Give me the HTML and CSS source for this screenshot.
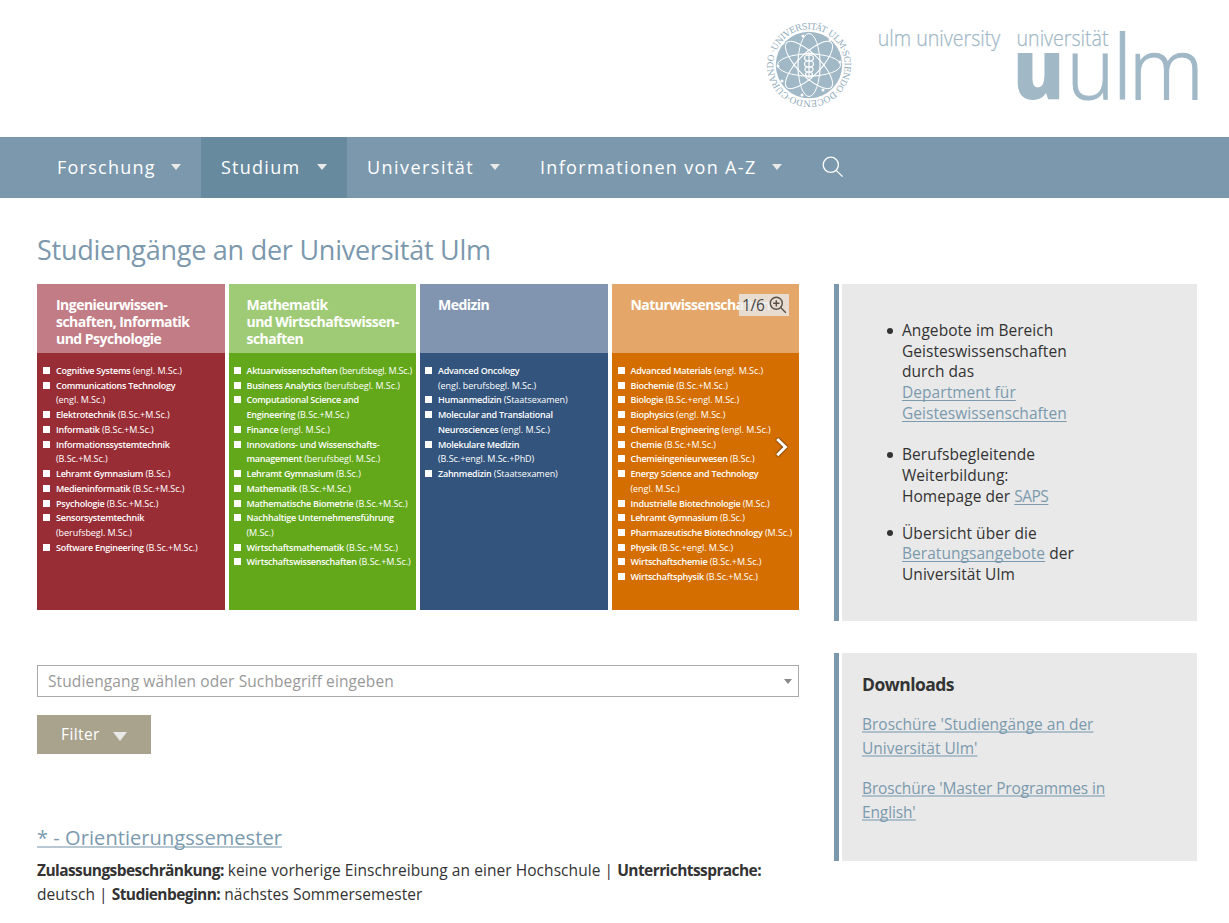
FILE: index.html
```
<!DOCTYPE html>
<html lang="de">
<head>
<meta charset="utf-8">
<title>Studiengänge an der Universität Ulm</title>
<link rel="stylesheet" href="styles.css">
</head>
<body>
<header class="header">
  <svg class="seal" viewBox="0 0 90 90" width="90" height="90" role="img" aria-label="Siegel der Universität Ulm">
    <defs><path id="ring" d="M11.3 33.2A35.7 35.7 0 0 1 78.7 56.8A35.7 35.7 0 0 1 11.3 33.2"/></defs>
    <circle cx="45" cy="45" r="33.2" fill="#a1b8c7"/>
    <g fill="none" stroke="#fff" stroke-width="1">
      <ellipse cx="45" cy="45" rx="31.5" ry="11"/>
      <ellipse cx="45" cy="45" rx="31.5" ry="11" transform="rotate(45 45 45)"/>
      <ellipse cx="45" cy="45" rx="31.5" ry="11" transform="rotate(90 45 45)"/>
      <ellipse cx="45" cy="45" rx="31.5" ry="11" transform="rotate(135 45 45)"/>
      <path stroke-width=".6" opacity=".7" d="M34 34h22v22H34zM45 29L61 45L45 61L29 45z"/>
    </g>
    <path fill="none" stroke="#fff" stroke-width="1.2" d="M45 32v26M45 35c-6 0-6 6 0 6s6 6 0 6-5 5 0 5 4 5 0 5M45 35c6 0 6 6 0 6s-6 6 0 6 5 5 0 5-4 5 0 5M40 33.5h10"/>
    <g fill="#fff">
      <circle cx="19" cy="23" r="1.5"/><circle cx="14" cy="46" r="1.5"/><circle cx="18" cy="61" r="1.5"/>
      <circle cx="38" cy="75" r="1.5"/><circle cx="59" cy="70" r="1.5"/><circle cx="76" cy="42" r="1.5"/>
      <circle cx="66" cy="20" r="1.5"/><circle cx="39" cy="16" r="1.5"/>
    </g>
    <text class="seal-text"><textPath href="#ring" textLength="222" lengthAdjust="spacing">·UNIVERSITÄT ULM·SCIENDO·DOCENDO·CURANDO</textPath></text>
  </svg>
  <svg class="wordmark" viewBox="0 0 330 90" width="330" height="90" role="img" aria-label="ulm university universität uulm">
    <g class="wm-small">
      <text x="7.8" y="30.6" textLength="122.5" lengthAdjust="spacingAndGlyphs">ulm university</text>
      <text x="146.5" y="30.6" textLength="92" lengthAdjust="spacingAndGlyphs">universität</text>
    </g>
    <g class="wm-large">
      <text class="wm-bold" x="142.8" y="83.5" textLength="51.5" lengthAdjust="spacingAndGlyphs">u</text>
      <text x="196.5" y="83.5" textLength="48" lengthAdjust="spacingAndGlyphs">u</text>
      <text class="wm-tall" x="242.5" y="83.5">l</text>
      <text x="258.5" y="83.5" textLength="75.5" lengthAdjust="spacingAndGlyphs">m</text>
    </g>
  </svg>
</header>

<nav class="nav">
  <a class="nav-item nav-forschung">Forschung<i class="caret"></i></a>
  <a class="nav-item nav-studium active">Studium<i class="caret"></i></a>
  <a class="nav-item nav-uni">Universität<i class="caret"></i></a>
  <a class="nav-item nav-info">Informationen von A-Z<i class="caret"></i></a>
  <a class="nav-search" aria-label="Suche"><svg viewBox="0 0 22 22" width="22" height="22" fill="none" stroke="#fff" stroke-width="1.3"><circle cx="8.8" cy="8.8" r="7.6"/><path d="M14.2 14.4L20.6 20.6"/></svg></a>
</nav>

<div class="page">
  <h1>Studiengänge an der Universität Ulm</h1>
  <div class="columns">
    <main class="main">
      <div class="slide">
        <section class="field red">
          <h2>Ingenieurwissen-<br>schaften, Informatik<br>und Psychologie</h2>
          <ul>
            <li><b>Cognitive Systems</b> (engl. M.Sc.)</li>
            <li><b>Communications Technology</b><br>(engl. M.Sc.)</li>
            <li><b>Elektrotechnik</b> (B.Sc.+M.Sc.)</li>
            <li><b>Informatik</b> (B.Sc.+M.Sc.)</li>
            <li><b>Informationssystemtechnik</b><br>(B.Sc.+M.Sc.)</li>
            <li><b>Lehramt Gymnasium</b> (B.Sc.)</li>
            <li><b>Medieninformatik</b> (B.Sc.+M.Sc.)</li>
            <li><b>Psychologie</b> (B.Sc.+M.Sc.)</li>
            <li><b>Sensorsystemtechnik</b><br>(berufsbegl. M.Sc.)</li>
            <li><b>Software Engineering</b> (B.Sc.+M.Sc.)</li>
          </ul>
        </section>
        <section class="field green">
          <h2>Mathematik<br>und Wirtschaftswissen-<br>schaften</h2>
          <ul>
            <li class="tight"><b>Aktuarwissenschaften</b> (berufsbegl. M.Sc.)</li>
            <li><b>Business Analytics</b> (berufsbegl. M.Sc.)</li>
            <li><b>Computational Science and<br>Engineering</b> (B.Sc.+M.Sc.)</li>
            <li><b>Finance</b> (engl. M.Sc.)</li>
            <li><b>Innovations- und Wissenschafts-<br>management</b> (berufsbegl. M.Sc.)</li>
            <li><b>Lehramt Gymnasium</b> (B.Sc.)</li>
            <li><b>Mathematik</b> (B.Sc.+M.Sc.)</li>
            <li><b>Mathematische Biometrie</b> (B.Sc.+M.Sc.)</li>
            <li><b>Nachhaltige Unternehmensführung</b><br>(M.Sc.)</li>
            <li><b>Wirtschaftsmathematik</b> (B.Sc.+M.Sc.)</li>
            <li><b>Wirtschaftswissenschaften</b> (B.Sc.+M.Sc.)</li>
          </ul>
        </section>
        <section class="field blue">
          <h2>Medizin</h2>
          <ul>
            <li><b>Advanced Oncology</b><br>(engl. berufsbegl. M.Sc.)</li>
            <li><b>Humanmedizin</b> (Staatsexamen)</li>
            <li><b>Molecular and Translational<br>Neurosciences</b> (engl. M.Sc.)</li>
            <li><b>Molekulare Medizin</b><br>(B.Sc.+engl. M.Sc.+PhD)</li>
            <li><b>Zahnmedizin</b> (Staatsexamen)</li>
          </ul>
        </section>
        <section class="field orange">
          <h2>Naturwissenschaften</h2>
          <ul>
            <li><b>Advanced Materials</b> (engl. M.Sc.)</li>
            <li><b>Biochemie</b> (B.Sc.+M.Sc.)</li>
            <li><b>Biologie</b> (B.Sc.+engl. M.Sc.)</li>
            <li><b>Biophysics</b> (engl. M.Sc.)</li>
            <li><b>Chemical Engineering</b> (engl. M.Sc.)</li>
            <li><b>Chemie</b> (B.Sc.+M.Sc.)</li>
            <li><b>Chemieingenieurwesen</b> (B.Sc.)</li>
            <li><b>Energy Science and Technology</b><br>(engl. M.Sc.)</li>
            <li><b>Industrielle Biotechnologie</b> (M.Sc.)</li>
            <li><b>Lehramt Gymnasium</b> (B.Sc.)</li>
            <li><b>Pharmazeutische Biotechnology</b> (M.Sc.)</li>
            <li><b>Physik</b> (B.Sc.+engl. M.Sc.)</li>
            <li><b>Wirtschaftschemie</b> (B.Sc.+M.Sc.)</li>
            <li><b>Wirtschaftsphysik</b> (B.Sc.+M.Sc.)</li>
          </ul>
        </section>
        <div class="counter"><span>1/6</span><svg viewBox="0 0 18 18" width="18" height="18" fill="none" stroke="#57504a" stroke-width="1.4"><circle cx="7.3" cy="7.3" r="6"/><path d="M11.6 11.6L16.8 16.8M7.3 4.2v6.2M4.2 7.3h6.2"/></svg></div>
        <svg class="next" viewBox="0 0 18 24" width="18" height="24"><path d="M4.2 4L12.4 12L4.2 20.2" fill="none" stroke="#fff" stroke-width="3"/></svg>
      </div>

      <div class="select"><span>Studiengang wählen oder Suchbegriff eingeben</span><i></i></div>
      <button class="filter" type="button">Filter<i></i></button>

      <h3><a>* - Orientierungssemester</a></h3>
      <p class="facts"><b>Zulassungsbeschränkung:</b> keine vorherige Einschreibung an einer Hochschule | <b>Unterrichtssprache:</b><br>deutsch | <b>Studienbeginn:</b> nächstes Sommersemester</p>
    </main>

    <aside class="side">
      <div class="box">
        <ul class="offers">
          <li>Angebote im Bereich<br>Geisteswissenschaften<br>durch das<br><a>Department für<br>Geisteswissenschaften</a></li>
          <li>Berufsbegleitende<br>Weiterbildung:<br>Homepage der <a class="tight">SAPS</a></li>
          <li>Übersicht über die<br><a>Beratungsangebote</a> der<br>Universität Ulm</li>
        </ul>
      </div>
      <div class="box downloads">
        <h4>Downloads</h4>
        <p><a>Broschüre 'Studiengänge an der<br>Universität Ulm'</a></p>
        <p class="tight"><a>Broschüre 'Master Programmes in<br>English'</a></p>
      </div>
    </aside>
  </div>
</div>
</body>
</html>
```
FILE: styles.css
```
* { box-sizing: border-box; }

body {
  margin: 0;
  height: 923px;
  overflow: hidden;
  background: #fff;
  color: #333;
  font: 15.5px/24px "Open Sans", "Noto Sans", sans-serif;
}

h1, h2, h3, h4, p, ul { margin: 0; padding: 0; font-weight: 400; }
ul { list-style: none; }

a {
  color: #7b9aae;
  text-decoration: underline;
  text-decoration-thickness: 1px;
  text-underline-offset: 2px;
  text-decoration-skip-ink: none;
}

/* Header */
.header {
  display: flex;
  height: 137px;
  padding: 20px 0 0 764px;
}
.seal-text {
  font: 400 8.6px "DejaVu Serif", serif;
  fill: #91abbc;
}
.wordmark { margin: -5px 0 0 16px; overflow: visible; fill: #a1b8c7; }
.wm-small { font: 300 21.5px "Open Sans", sans-serif; stroke: #a1b8c7; stroke-width: .25px; }
.wm-large { font: 300 84px "Open Sans", sans-serif; stroke: #a1b8c7; stroke-width: 1px; }
.wm-bold { font-weight: 800; stroke: none; }
.wm-tall { font-size: 88px; }

/* Navigation */
.nav {
  display: flex;
  height: 61px;
  padding-left: 37px;
  background: #7b98ad;
}
.nav-item {
  display: flex;
  align-items: center;
  justify-content: space-between;
  padding: 0 20px 2px;
  color: #fff;
  font-size: 18px;
  letter-spacing: 1.25px;
  text-decoration: none;
  white-space: nowrap;
}
.active { background: #688a9f; }
.nav-forschung { width: 164px; }
.nav-studium { width: 146px; }
.nav-uni { width: 173px; letter-spacing: 1.45px; }
.nav-info { width: 282px; letter-spacing: 1.33px; }
.caret {
  margin-top: 1px;
  border: 5px solid transparent;
  border-top: 6px solid #e9e9e9;
  border-bottom: 0;
}
.nav-search { display: flex; align-items: center; margin-left: 20px; padding-bottom: 1px; }

/* Page */
.page { padding: 0 32px 0 37px; }
h1 {
  padding-top: 32px;
  height: 86px;
  color: #7b98ad;
  font-size: 27px;
  line-height: 40px;
  letter-spacing: -.25px;
}
.columns { display: flex; justify-content: space-between; }
.main { width: 762px; }
.side { width: 363px; }

/* Slide with the four fields of study */
.slide {
  position: relative;
  display: grid;
  grid-template-columns: repeat(4, 187.5px);
  justify-content: space-between;
  height: 326px;
  color: #fff;
}
.field { overflow: hidden; white-space: nowrap; }
.field h2 {
  height: 69px;
  padding: 12px 0 0 19px;
  font-size: 14px;
  font-weight: 700;
  line-height: 17.2px;
  letter-spacing: -.52px;
}
.field ul {
  padding: 10.9px 0 0 19px;
  font-size: 9px;
  line-height: 14.73px;
  letter-spacing: -.05px;
}
.field li { position: relative; }
.field li::before {
  content: "";
  position: absolute;
  left: -13px;
  top: 3px;
  width: 7px;
  height: 7px;
  background: #fff;
}
.field b { font-weight: 600; letter-spacing: -.25px; }
.field .tight, .field .tight b { letter-spacing: -.24px; }
.field .tight b { letter-spacing: -.28px; }
.green h2, .green ul, .blue h2, .blue ul { padding-left: 18px; }
.red { background: #992d36; }
.red h2 { background: #c27c85; }
.green { background: #63a81b; }
.green h2 { background: #9fcb76; }
.blue { background: #32547d; }
.blue h2 { background: #8195b0; }
.orange { background: #d46e00; }
.orange h2 { background: #e4a769; }

.counter {
  position: absolute;
  top: 10px;
  right: 10px;
  display: flex;
  align-items: center;
  justify-content: space-between;
  width: 50px;
  height: 22px;
  padding: 0 2px 0 3px;
  background: rgba(233, 233, 233, .8);
  color: #444;
  letter-spacing: -.3px;
}
.next {
  position: absolute;
  top: 151px;
  right: 8px;
  filter: drop-shadow(0 0 1px rgba(0, 0, 0, .8));
}

/* Search and filter */
.select {
  display: flex;
  align-items: center;
  justify-content: space-between;
  height: 32px;
  margin-top: 55px;
  padding: 0 6px 0 10px;
  border: 1px solid #aaa;
  color: #999;
  letter-spacing: .1px;
}
.select i {
  border: 4px solid transparent;
  border-top: 5px solid #888;
  border-bottom: 0;
}
.filter {
  display: flex;
  align-items: center;
  justify-content: space-between;
  width: 114px;
  height: 39px;
  margin-top: 18px;
  padding: 0 24px 2px;
  border: 0;
  background: #a9a28d;
  color: #fff;
  font: inherit;
  letter-spacing: .4px;
}
.filter i {
  margin-top: 5px;
  border: 7px solid transparent;
  border-top: 9px solid #e9e9e9;
  border-bottom: 0;
}
h3 {
  margin-top: 68px;
  font-size: 20px;
  line-height: 32px;
  letter-spacing: .07px;
}
h3 a { text-underline-offset: 1px; text-decoration-color: #b8c8d3; text-decoration-thickness: 2px; }
.facts {
  margin-top: 4px;
  letter-spacing: .06px;
  white-space: nowrap;
}
.facts b { font-weight: 700; letter-spacing: -.58px; }

/* Sidebar */
.box {
  position: relative;
  height: 337px;
  margin-left: 8px;
  padding: 36px 20px 0;
  background: #e9e9e9;
}
.box::before {
  content: "";
  position: absolute;
  left: -8px;
  top: 0;
  bottom: 0;
  width: 5px;
  background: #7b98ad;
}
.box .tight { letter-spacing: -.13px; }
.box a.tight { letter-spacing: -.5px; }
.offers { padding-left: 40px; line-height: 20.7px; letter-spacing: .05px; }
.offers li { position: relative; margin-bottom: 16.4px; }
.offers li:first-child { margin-bottom: 20.7px; }
.offers li::before {
  content: "";
  position: absolute;
  left: -15px;
  top: 7.5px;
  width: 6px;
  height: 6px;
  border-radius: 50%;
  background: #333;
}
.downloads {
  height: 208px;
  margin-top: 32px;
  padding-top: 19px;
}
.downloads h4 {
  margin-bottom: 16px;
  font-size: 17.5px;
  font-weight: 700;
  letter-spacing: -.53px;
}
.downloads p { margin-bottom: 16px; }
.downloads a { text-underline-offset: 1px; text-decoration-color: #adc0cc; text-decoration-thickness: 2px; }
```
